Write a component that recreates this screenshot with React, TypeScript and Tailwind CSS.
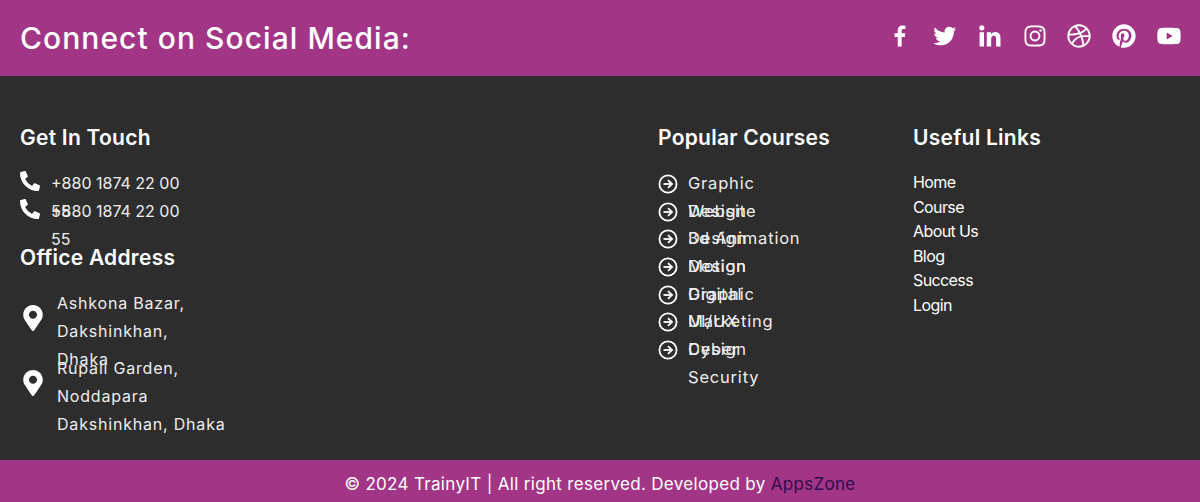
import React from 'react';
import { BiLogoFacebook, BiLogoTwitter, BiLogoLinkedin, BiLogoInstagram, BiLogoDribbble, BiLogoPinterest, BiLogoYoutube } from 'react-icons/bi';
import { FaPhoneAlt, FaMapMarkerAlt } from 'react-icons/fa';

const courses = ['Graphic Design', 'Website Design', '3d Animation Design', 'Motion Graphic', 'Digital Marketing', 'UI/UX Design', 'Cyber Security'];
const links = ['Home', 'Course', 'About Us', 'Blog', 'Success', 'Login'];
const socials = [BiLogoFacebook, BiLogoTwitter, BiLogoLinkedin, BiLogoInstagram, BiLogoDribbble, BiLogoPinterest, BiLogoYoutube];
const phones = ['+880 1874 22 00 55', '+880 1874 22 00 55'];

const Heading = ({ children }: { children: React.ReactNode }) => (
  <h3 className="text-[21px] leading-[28px] font-semibold tracking-[0.25px] text-white">{children}</h3>
);

const ArrowCircle = () => (
  <svg width="20" height="20" viewBox="0 0 20 20" fill="none" stroke="currentColor" className="shrink-0 mt-[4px]">
    <circle cx="10" cy="10" r="8.6" strokeWidth="1.8" />
    <path d="M5.5 10h7.5" strokeWidth="1.8" />
    <path d="M10 6.2 14 10l-4 3.8" strokeWidth="1.8" />
  </svg>
);

const App = () => {
  return (
    <div className="w-[1200px] h-[502px] overflow-hidden flex flex-col bg-[#2d2d2d] font-['Inter',sans-serif]">
      {/* Social bar */}
      <div className="h-[76px] shrink-0 flex items-center justify-between pl-5 pr-[17px] bg-[#a33587]">
        <h2 className="text-[30px] leading-[36px] font-medium tracking-[1.05px] text-white">Connect on Social Media:</h2>
        <div className="flex items-center gap-[16.8px] -mt-[5px]">
          {socials.map((Icon, i) => (
            <Icon key={i} size={28} className="text-white" />
          ))}
        </div>
      </div>

      {/* Footer columns */}
      <div className="flex-1 flex px-5 pt-[48px] text-white">
        <div className="w-[638px] shrink-0">
          <Heading>Get In Touch</Heading>
          <ul className="mt-[18px] h-[74px]">
            {phones.map((p, i) => (
              <li key={i} className="h-[28px] flex">
                <FaPhoneAlt size={20} className="shrink-0 mt-[1px]" />
                <span className="ml-[11px] w-[135px] text-[16px] leading-[27.7px] text-[#eeeeee]">{p}</span>
              </li>
            ))}
          </ul>
          <Heading>Office Address</Heading>
          <ul className="mt-[17px]">
            <li className="h-[65px] flex">
              <FaMapMarkerAlt size={26} className="shrink-0 mt-[16px]" />
              <span className="ml-[11px] w-[150px] text-[16px] leading-[28px] tracking-[0.8px] text-[#eeeeee]">Ashkona Bazar, Dakshinkhan, Dhaka</span>
            </li>
            <li className="h-[65px] flex">
              <FaMapMarkerAlt size={26} className="shrink-0 mt-[16px]" />
              <span className="ml-[11px] w-[175px] text-[16px] leading-[28px] tracking-[0.8px] text-[#eeeeee]">Rupali Garden, Noddapara Dakshinkhan, Dhaka</span>
            </li>
          </ul>
        </div>

        <div className="w-[255px] shrink-0">
          <Heading>Popular Courses</Heading>
          <ul className="mt-[18px]">
            {courses.map((c) => (
              <li key={c} className="h-[27.67px] flex">
                <ArrowCircle />
                <span className="ml-[10px] w-[113px] text-[16.5px] leading-[27.67px] tracking-[0.8px] text-[#eeeeee]">{c}</span>
              </li>
            ))}
          </ul>
        </div>

        <div>
          <Heading>Useful Links</Heading>
          <ul className="mt-[18px]">
            {links.map((l) => (
              <li key={l} className="h-[24.5px] text-[16px] leading-[24.5px] tracking-[-0.6px] text-white">{l}</li>
            ))}
          </ul>
        </div>
      </div>

      {/* Copyright */}
      <div className="h-[42px] shrink-0 flex items-center justify-center pt-[7px] bg-[#a33587] text-[17px] tracking-[0.32px] text-white">
        <p>© 2024 TrainyIT | All right reserved. Developed by <a className="text-[#2f0c4a]">AppsZone</a></p>
      </div>
    </div>
  );
};

export default App;
